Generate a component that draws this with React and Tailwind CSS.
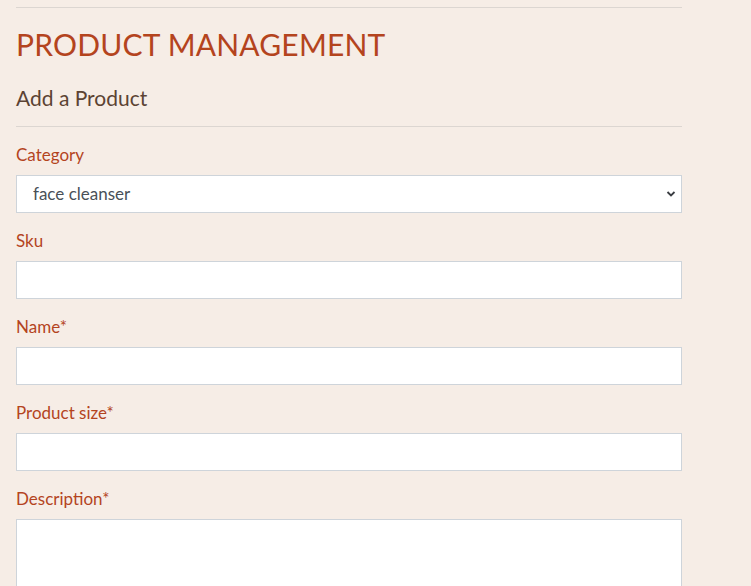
export default function App() {
  const fields = ["Sku", "Name*", "Product size*"];
  return (
    <div className="min-h-[586px] bg-[#f6ede6] font-['Lato',sans-serif]">
      <div className="w-[698px] px-4 pt-[7px]">
        <hr className="border-t border-[#dcd6d1]" />
        <h1 className="mt-[16px] text-[30px] leading-[40px] text-[#b4441e] tracking-[0.2px]">
          PRODUCT MANAGEMENT
        </h1>
        <h4 className="mt-[21px] text-[21px] leading-[26px] text-[#5c4333]">Add a Product</h4>
        <hr className="mt-[15px] border-t border-[#dcd6d1]" />

        <div className="mt-[16px]">
          <label className="block text-[17px] leading-6 text-[#b4441e]">Category</label>
          <div className="relative mt-2">
            <select className="h-[38px] w-full appearance-none border border-[#ced4da] bg-white pl-4 text-[17px] text-[#495057] outline-none">
              <option>face cleanser</option>
            </select>
            <svg
              className="pointer-events-none absolute right-[6px] top-[15px]"
              width="10"
              height="8"
              viewBox="0 0 10 8"
            >
              <path d="M1.5 2l3.5 3.5L8.5 2" fill="none" stroke="#3a3d42" strokeWidth="1.8" />
            </svg>
          </div>
        </div>

        {fields.map((f) => (
          <div key={f} className="mt-4">
            <label className="block text-[17px] leading-6 text-[#b4441e]">{f}</label>
            <input className="mt-2 block h-[38px] w-full border border-[#ced4da] bg-white px-3 outline-none" />
          </div>
        ))}

        <div className="mt-4">
          <label className="block text-[17px] leading-6 text-[#b4441e]">Description*</label>
          <textarea className="mt-2 block h-[100px] w-full resize-none border border-[#ced4da] bg-white px-3 outline-none" />
        </div>
      </div>
    </div>
  );
}
